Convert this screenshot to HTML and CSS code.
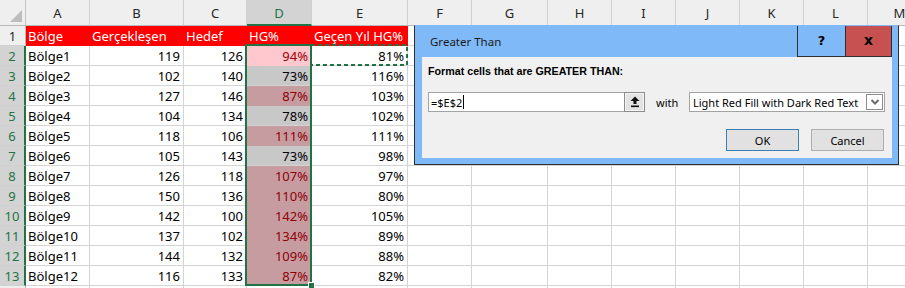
FILE: index.html
```html
<!DOCTYPE html>
<html>
<head>
<meta charset="utf-8">
<link rel="stylesheet" href="styles.css">
</head>
<body>
<div class="page">
  <div class="sheet">
    <div class="ch corner"><span class="tri"></span></div>
    <div class="ch">A</div><div class="ch">B</div><div class="ch">C</div><div class="ch chsel">D</div><div class="ch">E</div><div class="ch">F</div><div class="ch">G</div><div class="ch">H</div><div class="ch">I</div><div class="ch">J</div><div class="ch">K</div><div class="ch">L</div><div class="ch">M</div>

    <div class="rh">1</div>
    <div class="c hd">Bölge</div><div class="c hd">Gerçekleşen</div><div class="c hd">Hedef</div><div class="c hd">HG%</div><div class="c hd">Geçen Yıl HG%</div><div class="c"></div><div class="c"></div><div class="c"></div><div class="c"></div><div class="c"></div><div class="c"></div><div class="c"></div><div class="c"></div>

    <div class="rh rsel">2</div>
    <div class="c">Bölge1</div><div class="c n">119</div><div class="c n">126</div><div class="c n act">94%</div><div class="c n">81%</div><div class="c"></div><div class="c"></div><div class="c"></div><div class="c"></div><div class="c"></div><div class="c"></div><div class="c"></div><div class="c"></div>

    <div class="rh rsel">3</div>
    <div class="c">Bölge2</div><div class="c n">102</div><div class="c n">140</div><div class="c n gr">73%</div><div class="c n">116%</div><div class="c"></div><div class="c"></div><div class="c"></div><div class="c"></div><div class="c"></div><div class="c"></div><div class="c"></div><div class="c"></div>

    <div class="rh rsel">4</div>
    <div class="c">Bölge3</div><div class="c n">127</div><div class="c n">146</div><div class="c n cf">87%</div><div class="c n">103%</div><div class="c"></div><div class="c"></div><div class="c"></div><div class="c"></div><div class="c"></div><div class="c"></div><div class="c"></div><div class="c"></div>

    <div class="rh rsel">5</div>
    <div class="c">Bölge4</div><div class="c n">104</div><div class="c n">134</div><div class="c n gr">78%</div><div class="c n">102%</div><div class="c"></div><div class="c"></div><div class="c"></div><div class="c"></div><div class="c"></div><div class="c"></div><div class="c"></div><div class="c"></div>

    <div class="rh rsel">6</div>
    <div class="c">Bölge5</div><div class="c n">118</div><div class="c n">106</div><div class="c n cf">111%</div><div class="c n">111%</div><div class="c"></div><div class="c"></div><div class="c"></div><div class="c"></div><div class="c"></div><div class="c"></div><div class="c"></div><div class="c"></div>

    <div class="rh rsel">7</div>
    <div class="c">Bölge6</div><div class="c n">105</div><div class="c n">143</div><div class="c n gr">73%</div><div class="c n">98%</div><div class="c"></div><div class="c"></div><div class="c"></div><div class="c"></div><div class="c"></div><div class="c"></div><div class="c"></div><div class="c"></div>

    <div class="rh rsel">8</div>
    <div class="c">Bölge7</div><div class="c n">126</div><div class="c n">118</div><div class="c n cf">107%</div><div class="c n">97%</div><div class="c"></div><div class="c"></div><div class="c"></div><div class="c"></div><div class="c"></div><div class="c"></div><div class="c"></div><div class="c"></div>

    <div class="rh rsel">9</div>
    <div class="c">Bölge8</div><div class="c n">150</div><div class="c n">136</div><div class="c n cf">110%</div><div class="c n">80%</div><div class="c"></div><div class="c"></div><div class="c"></div><div class="c"></div><div class="c"></div><div class="c"></div><div class="c"></div><div class="c"></div>

    <div class="rh rsel">10</div>
    <div class="c">Bölge9</div><div class="c n">142</div><div class="c n">100</div><div class="c n cf">142%</div><div class="c n">105%</div><div class="c"></div><div class="c"></div><div class="c"></div><div class="c"></div><div class="c"></div><div class="c"></div><div class="c"></div><div class="c"></div>

    <div class="rh rsel">11</div>
    <div class="c">Bölge10</div><div class="c n">137</div><div class="c n">102</div><div class="c n cf">134%</div><div class="c n">89%</div><div class="c"></div><div class="c"></div><div class="c"></div><div class="c"></div><div class="c"></div><div class="c"></div><div class="c"></div><div class="c"></div>

    <div class="rh rsel">12</div>
    <div class="c">Bölge11</div><div class="c n">144</div><div class="c n">132</div><div class="c n cf">109%</div><div class="c n">88%</div><div class="c"></div><div class="c"></div><div class="c"></div><div class="c"></div><div class="c"></div><div class="c"></div><div class="c"></div><div class="c"></div>

    <div class="rh rsel">13</div>
    <div class="c">Bölge12</div><div class="c n">116</div><div class="c n">133</div><div class="c n cf">87%</div><div class="c n">82%</div><div class="c"></div><div class="c"></div><div class="c"></div><div class="c"></div><div class="c"></div><div class="c"></div><div class="c"></div><div class="c"></div>

    <div class="rh"></div>
    <div class="c"></div><div class="c"></div><div class="c"></div><div class="c"></div><div class="c"></div><div class="c"></div><div class="c"></div><div class="c"></div><div class="c"></div><div class="c"></div><div class="c"></div><div class="c"></div><div class="c"></div>
  </div>

  <div class="selbox"></div>
  <div class="handle"></div>
  <svg class="ants" width="98" height="22" viewBox="0 0 98 22"><rect x="1" y="1" width="96" height="20" fill="none" stroke="#217346" stroke-width="2" stroke-dasharray="4 3"/></svg>

  <div class="dialog">
    <div class="titlebar">
      <span class="title">Greater Than</span>
      <span class="tbtn help">?</span>
      <span class="tbtn close">x</span>
    </div>
    <div class="body">
      <div class="label">Format cells that are GREATER THAN:</div>
      <div class="inrow">
        <div class="input"><span>=$E$2</span><span class="caret"></span></div>
        <div class="collapse"><svg width="10" height="12" viewBox="0 0 10 12"><path d="M5 0.5 L9.5 5 H6.5 V8 H3.5 V5 H0.5 Z" fill="#111"/><rect x="1" y="9.5" width="8" height="1.6" fill="#111"/></svg></div>
        <span class="with">with</span>
        <div class="select"><span>Light Red Fill with Dark Red Text</span><span class="drop"><svg width="12" height="10" viewBox="0 0 12 10"><path d="M2.5 3 L6 6.5 L9.5 3" fill="none" stroke="#6b6b6b" stroke-width="2"/></svg></span></div>
      </div>
      <div class="btnrow">
        <div class="btn ok">OK</div>
        <div class="btn">Cancel</div>
      </div>
    </div>
  </div>
</div>
</body>
</html>
```

FILE: styles.css
```css
html, body {
  margin: 0;
  padding: 0;
  background: #ffffff;
}

.page {
  position: relative;
  width: 905px;
  height: 288px;
  overflow: hidden;
}

.sheet {
  display: grid;
  grid-template-columns: 26px 64px 94px 63px 65px 96px 64px 76px 64px 64px 64px 64px 64px 64px;
  grid-template-rows: 26px repeat(14, 20px);
  font-family: "Noto Sans", "Liberation Sans", sans-serif;
  font-size: 13px;
  color: #000;
}

.ch {
  box-sizing: border-box;
  background: #efefef;
  border-right: 1px solid #d0d0d0;
  border-bottom: 1px solid #b9b9b9;
  display: flex;
  align-items: center;
  justify-content: center;
  color: #262626;
  padding-top: 1px;
}

.corner {
  position: relative;
  border-right: 1px solid #c6c6c6;
}

.tri {
  position: absolute;
  right: 3px;
  bottom: 3px;
  width: 0;
  height: 0;
  border-left: 12px solid transparent;
  border-bottom: 12px solid #bdbdbd;
}

.chsel {
  background: #d3d3d3;
  color: #217346;
  border-bottom: 2px solid #217346;
}

.rh {
  box-sizing: border-box;
  background: #efefef;
  border-right: 1px solid #b9b9b9;
  border-bottom: 1px solid #d0d0d0;
  display: flex;
  align-items: center;
  justify-content: center;
  color: #262626;
}

.rsel {
  background: #d3d3d3;
  color: #217346;
  border-right: 2px solid #217346;
}

.c {
  box-sizing: border-box;
  border-right: 1px solid #d4d4d4;
  border-bottom: 1px solid #d4d4d4;
  display: flex;
  align-items: center;
  padding: 0 3px 0 2px;
  white-space: nowrap;
  overflow: hidden;
}

.n {
  justify-content: flex-end;
}

.hd {
  background: #ff0000;
  color: #ffffff;
  border-right-color: #ff0000;
  border-bottom-color: #ff0000;
}

.act {
  background: #ffc7ce;
  color: #9c0006;
  border-bottom-color: #ffc7ce;
}

.cf {
  background: #c69ca1;
  color: #8e0006;
  border-bottom-color: #c69ca1;
}

.gr {
  background: #c8c8c8;
}

.selbox {
  position: absolute;
  left: 245px;
  top: 44px;
  width: 67px;
  height: 242px;
  box-sizing: border-box;
  border: 2px solid #217346;
}

.handle {
  position: absolute;
  left: 308px;
  top: 282px;
  width: 5px;
  height: 5px;
  background: #217346;
  border: 1px solid #ffffff;
}

.ants {
  position: absolute;
  left: 310px;
  top: 44px;
}

/* dialog */
.dialog {
  position: absolute;
  left: 414px;
  top: 25px;
  width: 485px;
  height: 140px;
  box-sizing: border-box;
  border: 1px solid #2f2f2f;
  border-top-color: #80b9f7;
  background: #80b9f7;
  padding: 0 6px 6px 7px;
  display: flex;
  flex-direction: column;
  font-family: "Noto Sans", "Liberation Sans", sans-serif;
  font-size: 11px;
  color: #000;
}

.titlebar {
  height: 31px;
  display: flex;
  align-items: stretch;
}

.title {
  flex: 1;
  display: flex;
  align-items: center;
  padding-left: 8px;
  font-size: 11.5px;
  color: #1a1a1a;
}

.tbtn {
  box-sizing: border-box;
  display: flex;
  align-items: center;
  justify-content: center;
  border: 1px solid #2f2f2f;
  border-top: none;
  font-family: "DejaVu Sans", sans-serif;
  font-weight: bold;
  font-size: 13px;
  padding-bottom: 2px;
}

.help {
  width: 48px;
  background: #80b9f7;
  border-right: none;
}

.close {
  width: 47px;
  background: #c75050;
  font-size: 14px;
}

.body {
  flex: 1;
  background: #f0f0f0;
  padding: 6px 7px 0 6px;
  display: flex;
  flex-direction: column;
}

.label {
  height: 16px;
  line-height: 16px;
  font-family: "Liberation Sans", sans-serif;
  font-weight: bold;
  font-size: 10.7px;
}

.inrow {
  margin-top: 13px;
  height: 20px;
  display: flex;
  align-items: stretch;
}

.input {
  box-sizing: border-box;
  width: 196px;
  background: #fff;
  border: 1px solid #a3a3a3;
  border-right: none;
  display: flex;
  align-items: center;
  padding-left: 2px;
}

.caret {
  width: 1px;
  height: 14px;
  background: #000;
  margin-left: 1px;
}

.collapse {
  box-sizing: border-box;
  width: 21px;
  background: #e3e3e3;
  border: 1px solid #8c8c8c;
  box-shadow: inset 0 0 0 1px #f4f4f4;
  display: flex;
  align-items: center;
  justify-content: center;
}

.with {
  display: flex;
  align-items: center;
  margin-left: 11px;
  width: 33px;
}

.select {
  box-sizing: border-box;
  width: 196px;
  background: #fff;
  border: 1px solid #a3a3a3;
  display: flex;
  align-items: center;
  justify-content: space-between;
  padding-left: 3px;
  padding-right: 1px;
  white-space: nowrap;
}

.drop {
  box-sizing: border-box;
  width: 17px;
  height: 16px;
  border: 1px solid #8c8c8c;
  display: flex;
  align-items: center;
  justify-content: center;
  background: #fff;
}

.btnrow {
  margin-top: 17px;
  display: flex;
  justify-content: flex-end;
  gap: 12px;
  padding-right: 1px;
}

.btn {
  box-sizing: border-box;
  width: 73px;
  height: 22px;
  background: #e1e1e1;
  border: 1px solid #adadad;
  display: flex;
  align-items: center;
  justify-content: center;
}

.ok {
  border-color: #3c7fb1;
}
```
